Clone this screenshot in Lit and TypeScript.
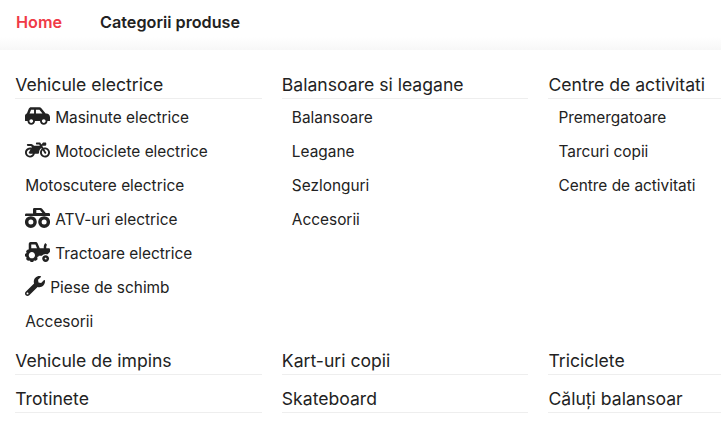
import { LitElement, html, css, svg } from "lit";
import { customElement } from "lit/decorators.js";

const P: Record<string, [number, string]> = {
  car: [640, "M544 192h-16L419.22 56.02A64.025 64.025 0 0 0 369.24 32H155.33c-26.17 0-49.7 15.93-59.42 40.23L48 194.26C20.44 201.4 0 226.21 0 256v112c0 8.84 7.16 16 16 16h48c0 53.02 42.98 96 96 96s96-42.98 96-96h128c0 53.02 42.98 96 96 96s96-42.98 96-96h48c8.84 0 16-7.16 16-16v-80c0-53.02-42.98-96-96-96zM160 432c-26.47 0-48-21.53-48-48s21.53-48 48-48 48 21.53 48 48-21.53 48-48 48zm72-240H116.93l38.4-96H232v96zm48 0V96h89.24l76.8 96H280zm200 240c-26.47 0-48-21.53-48-48s21.53-48 48-48 48 21.53 48 48-21.53 48-48 48z"],
  moto: [640, "M512.9 192c-14.9-.1-29.1 2.3-42.4 6.9L437.6 144H520c13.3 0 24-10.7 24-24V88c0-13.3-10.7-24-24-24h-45.3c-6.8 0-13.3 2.9-17.8 7.9l-37.5 41.7-22.8-38C392.2 68.4 384.4 64 376 64h-80c-8.8 0-16 7.2-16 16v16c0 8.8 7.2 16 16 16h66.4l19.2 32H227.9c-17.7-23.1-44.9-40-99.9-40H72.5C59 104 47.7 115 48 128.5c.2 13 10.9 23.5 24 23.5h56c24.5 0 38.7 10.9 47.8 24.8l-11.3 20.5c-13-3.9-26.9-5.7-41.3-5.2C55.9 194.5 1.6 249.6 0 317c-1.6 72.1 56.3 131 128 131 59.6 0 109.7-40.8 124-96h84.2c13.7 0 24.6-11.4 24-25.1-2.1-47.1 17.5-93.7 56.2-125l12.5 20.8c-27.6 23.7-45.1 58.9-44.8 98.2.5 69.6 57.2 126.5 126.8 127.1 71.6.7 129.8-57.5 129.2-129.1-.7-69.5-56.4-126.3-127.2-127zM128 400c-44.1 0-80-35.9-80-80s35.9-80 80-80c4.2 0 8.4.3 12.5 1L99 316.4c-8.8 16 2.8 35.6 21 35.6h81.3c-12.4 28.2-40.6 48-73.3 48zm384 0c-44.1 0-80-35.9-80-80 0-21.4 8.5-40.8 22.2-55.2l48.3 80.4c4.5 7.6 14.4 10 22 5.5l13.7-8.2c7.6-4.5 10-14.4 5.5-22l-47.8-79.6c5.3-1.1 10.7-1.7 16.1-1.7 44.1 0 80 35.9 80 80s-35.9 80-80 80z"],
  truck: [640, "M0 170a32 32 0 0 1 32-32H205V32A32 32 0 0 1 237 0H400a48 48 0 0 1 38 19L528 130h80a32 32 0 0 1 32 32v29a16 16 0 0 1-16 16H16a16 16 0 0 1-16-16zM290 52v78h155l-62-78z M150 208a152 152 0 1 0 0 304 152 152 0 0 0 0-304zM150 296a64 64 0 1 1 0 128 64 64 0 0 1 0-128z M490 208a152 152 0 1 0 0 304 152 152 0 0 0 0-304zM490 296a64 64 0 1 1 0 128 64 64 0 0 1 0-128z"],
  tractor: [640, "M528 336c-48.6 0-88 39.4-88 88s39.4 88 88 88 88-39.4 88-88-39.4-88-88-88zm0 112c-13.23 0-24-10.77-24-24s10.77-24 24-24 24 10.77 24 24-10.77 24-24 24zm80-288h-64v-40.2c0-14.12 4.7-27.76 13.15-38.84 4.42-5.8 3.55-14.06-1.32-19.49L534.2 37.3c-6.66-7.45-18.32-6.92-24.7.78C490.58 60.9 480 89.81 480 119.8V160H377.67L321.58 29.14A47.914 47.914 0 0 0 277.45 0H144c-26.47 0-48 21.53-48 48v146.52c-8.63-6.73-20.96-6.46-28.89 1.47L36 227.1c-8.59 8.59-8.59 22.52 0 31.11l5.06 5.06c-4.99 9.26-8.96 18.82-11.91 28.72H22c-12.15 0-22 9.85-22 22v44c0 12.15 9.85 22 22 22h7.14c2.96 9.91 6.92 19.46 11.91 28.73l-5.06 5.06c-8.59 8.59-8.59 22.52 0 31.11L67.1 476c8.59 8.59 22.52 8.59 31.11 0l5.06-5.06c9.26 4.99 18.82 8.96 28.72 11.91V490c0 12.15 9.85 22 22 22h44c12.15 0 22-9.85 22-22v-7.14c9.9-2.95 19.46-6.92 28.72-11.91l5.06 5.06c8.59 8.59 22.52 8.59 31.11 0l31.11-31.11c8.59-8.59 8.59-22.52 0-31.11l-5.06-5.06c4.99-9.26 8.96-18.82 11.91-28.72H330c12.15 0 22-9.85 22-22v-6h80.54c21.91-28.99 56.32-48 95.46-48 18.64 0 36.07 4.61 51.8 12.2l50.82-50.82c6-6 9.37-14.14 9.37-22.63V192c.01-17.67-14.32-32-31.99-32zM176 416c-44.18 0-80-35.82-80-80s35.82-80 80-80 80 35.82 80 80-35.82 80-80 80zm22-256h-38V64h106.89l41.15 96H198z"],
  wrench: [512, "M507.73 109.1c-2.24-9.03-13.54-12.09-20.12-5.51l-74.36 74.36-67.88-11.31-11.31-67.88 74.36-74.36c6.62-6.62 3.43-17.9-5.66-20.16-47.38-11.74-99.55.91-136.58 37.93-39.64 39.64-50.55 97.1-34.05 147.2L18.74 402.76c-24.99 24.99-24.99 65.51 0 90.5 24.99 24.99 65.51 24.99 90.5 0l213.21-213.21c50.12 16.71 107.47 5.68 147.37-34.22 37.07-37.07 49.7-89.32 37.91-136.73zM64 472c-13.25 0-24-10.75-24-24 0-13.26 10.75-24 24-24s24 10.74 24 24c0 13.25-10.75 24-24 24z"],
};

const icon = (n: string) => {
  const [w, d] = P[n];
  const cls = w === 640 ? "ic wide" : "ic";
  return html`<svg class=${cls} viewBox="0 0 ${w} 512" aria-hidden="true">${svg`<path fill="currentColor" fill-rule="evenodd" d=${d}></path>`}</svg>`;
};

type Item = [string, string?];
type Col = { title: string; items?: Item[] };

const TOP: Col[] = [
  { title: "Vehicule electrice", items: [["Masinute electrice", "car"], ["Motociclete electrice", "moto"], ["Motoscutere electrice"], ["ATV-uri electrice", "truck"], ["Tractoare electrice", "tractor"], ["Piese de schimb", "wrench"], ["Accesorii"]] },
  { title: "Balansoare si leagane", items: [["Balansoare"], ["Leagane"], ["Sezlonguri"], ["Accesorii"]] },
  { title: "Centre de activitati", items: [["Premergatoare"], ["Tarcuri copii"], ["Centre de activitati"]] },
  { title: "Vehicule de impins" },
  { title: "Kart-uri copii" },
  { title: "Triciclete" },
  { title: "Trotinete" },
  { title: "Skateboard" },
  { title: "Căluți balansoar" },
];

@customElement("app-root")
export class AppRoot extends LitElement {
  static styles = css`
    :host {
      display: block;
      width: 721px;
      height: 426px;
      overflow: hidden;
      background: #fff;
      color: #222;
      font-family: "Inter", "Noto Sans", sans-serif;
    }
    .nav {
      display: flex;
      gap: 38px;
      height: 44px;
      padding-bottom: 6px;
      align-items: center;
      padding-left: 16px;
      font-size: 16.2px;
      font-weight: 600;
      background: linear-gradient(#fff 37px, #f7f7f7 50px);
    }
    .nav a { color: #222; }
    .nav a.home { color: #f03a47; }
    .grid {
      display: grid;
      grid-template-columns: repeat(3, 246.65px);
      column-gap: 20px;
      padding: 25px 0 0 15.2px;
    }
    .col { padding-bottom: 14px; }
    h3 {
      margin: 0;
      font-size: 17.6px;
      font-weight: 400;
      line-height: 20px;
      height: 23px;
      border-bottom: 1px solid #eee;
      white-space: nowrap;
    }
    ul { list-style: none; margin: 0; padding: 0 0 0 10px; }
    li {
      height: 34px;
      box-sizing: border-box;
      padding-top: 2px;
      display: flex;
      align-items: center;
      gap: 5px;
      font-size: 15.4px;
      white-space: nowrap;
    }
    .ic { width: 20px; height: 20px; flex: none; margin-bottom: 2px; }
    .ic.wide { width: 25px; }
  `;

  render() {
    return html`
      <nav class="nav"><a class="home">Home</a><a>Categorii produse</a></nav>
      <div class="grid">
        ${TOP.map(
          (c) => html`<section class="col">
            <h3>${c.title}</h3>
            ${c.items
              ? html`<ul>${c.items.map(([t, i]) => html`<li>${i ? icon(i) : ""}<span>${t}</span></li>`)}</ul>`
              : ""}
          </section>`
        )}
      </div>
    `;
  }
}
